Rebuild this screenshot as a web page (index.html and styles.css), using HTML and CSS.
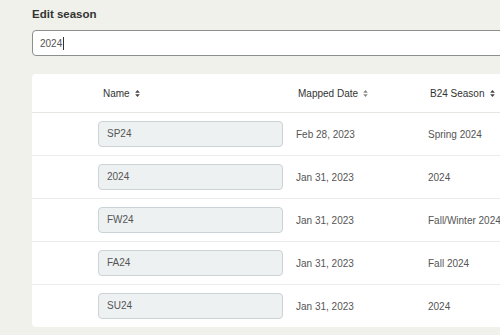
FILE: index.html
```html
<!DOCTYPE html>
<html lang="en">
<head>
    <meta charset="UTF-8">
    <meta name="viewport" content="width=device-width, initial-scale=1.0">
    <title>Edit season</title>
    <link rel="stylesheet" href="styles.css">
</head>
<body>
    <div class="page">
        <h1 class="title">Edit season</h1>
        <div class="search">
            <span class="search-value">2024</span><span class="caret"></span>
        </div>

        <div class="card">
            <div class="row head">
                <div></div>
                <div class="th th-name">Name <svg class="sort" viewBox="0 0 6 9"><path d="M3 0L6 3.5H0z"/><path d="M3 9L0 5.5H6z"/></svg></div>
                <div class="th">Mapped Date <svg class="sort faint" viewBox="0 0 6 9"><path d="M3 0L6 3.5H0z"/><path d="M3 9L0 5.5H6z"/></svg></div>
                <div class="th">B24 Season <svg class="sort" viewBox="0 0 6 9"><path d="M3 0L6 3.5H0z"/><path d="M3 9L0 5.5H6z"/></svg></div>
            </div>
            <div class="row">
                <div></div>
                <div><div class="name-box">SP24</div></div>
                <div class="cell">Feb 28, 2023</div>
                <div class="cell">Spring 2024</div>
            </div>
            <div class="row">
                <div></div>
                <div><div class="name-box">2024</div></div>
                <div class="cell">Jan 31, 2023</div>
                <div class="cell">2024</div>
            </div>
            <div class="row">
                <div></div>
                <div><div class="name-box">FW24</div></div>
                <div class="cell">Jan 31, 2023</div>
                <div class="cell">Fall/Winter 2024</div>
            </div>
            <div class="row">
                <div></div>
                <div><div class="name-box">FA24</div></div>
                <div class="cell">Jan 31, 2023</div>
                <div class="cell">Fall 2024</div>
            </div>
            <div class="row">
                <div></div>
                <div><div class="name-box">SU24</div></div>
                <div class="cell">Jan 31, 2023</div>
                <div class="cell">2024</div>
            </div>
        </div>
    </div>
</body>
</html>
```

FILE: styles.css
```css
html, body {
    margin: 0;
    height: 100%;
    overflow: hidden;
}
body {
    background-color: #f1f1ec;
    font-family: "Liberation Sans", Arial, sans-serif;
    color: #555;
}
.page {
    padding: 6px 0 0 32px;
    width: 520px;
}
.title {
    margin: 0;
    font-size: 11.5px;
    line-height: 16px;
    font-weight: bold;
    color: #333;
}
.search {
    margin-top: 8px;
    height: 24px;
    border: 1px solid #8c908c;
    border-radius: 4px;
    background-color: #fff;
    display: flex;
    align-items: center;
    padding-left: 7px;
    font-size: 10px;
    color: #555;
}
.caret {
    display: inline-block;
    width: 1px;
    height: 13px;
    margin-left: 1px;
    background-color: #333;
}
.card {
    margin-top: 18px;
    background-color: #fff;
    border-radius: 4px;
}
.row {
    display: grid;
    grid-template-columns: 66px 198px 132px 1fr;
    align-items: center;
    height: 42px;
    border-bottom: 1px solid #ececea;
    font-size: 10px;
}
.row:last-child {
    border-bottom: none;
}
.row.head {
    height: 38px;
    border-bottom-color: #e6e6e3;
}
.th {
    color: #333;
    display: flex;
    align-items: center;
    gap: 5px;
    padding-left: 2px;
}
.th-name {
    padding-left: 5px;
}
.sort {
    width: 5px;
    height: 7px;
    fill: #444;
}
.sort.faint {
    fill: #888;
}
.name-box {
    width: 175px;
    height: 24px;
    line-height: 24px;
    padding-left: 8px;
    background-color: #eef1f2;
    border: 1px solid #cbd3d6;
    border-radius: 4px;
    color: #555;
}
.cell {
    color: #555;
}
```
